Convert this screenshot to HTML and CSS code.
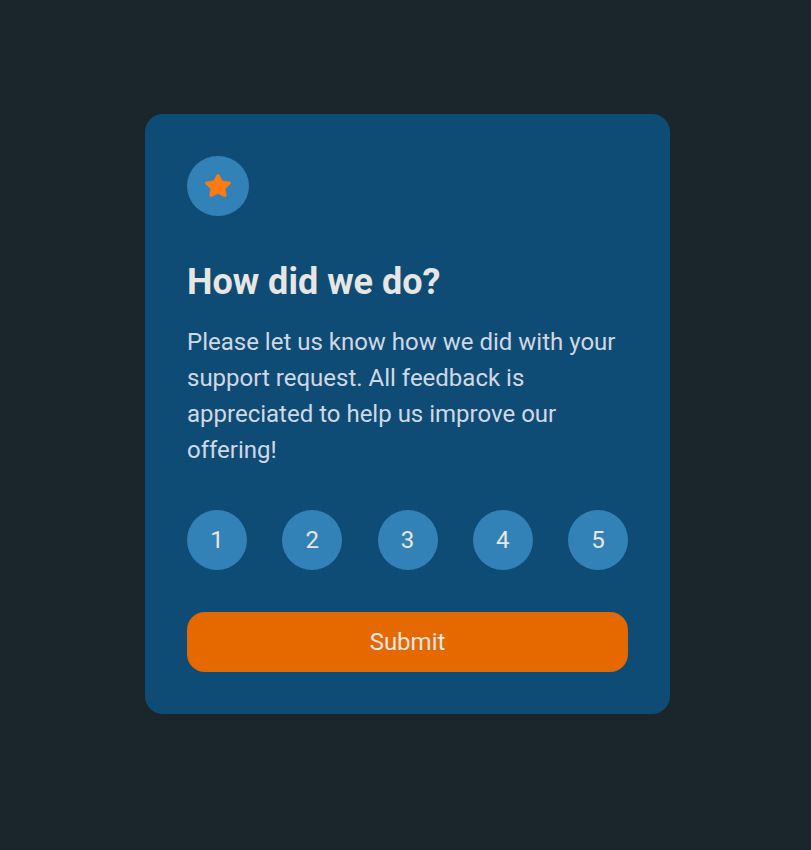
FILE: index.html
```html
<!DOCTYPE html>
<html lang="en">
<head>
<meta charset="utf-8">
<title>Rating</title>
<link rel="stylesheet" href="styles.css">
</head>
<body>
<main class="card">
  <div class="star">
    <svg viewBox="0 0 17 16" width="26" height="23" preserveAspectRatio="none"><path fill="#ff7a14" stroke="#ff7a14" stroke-width=".35" stroke-linejoin="round" d="m9.3.75 1.8 3.6c.13.26.38.43.66.47l4.1.55c.85.12 1.18 1.15.57 1.74l-2.95 2.8a.9.9 0 0 0-.25.8l.72 3.9c.15.84-.72 1.47-1.47 1.07l-3.56-1.86a.9.9 0 0 0-.84 0l-3.56 1.86c-.75.4-1.62-.23-1.47-1.07l.72-3.9a.9.9 0 0 0-.25-.8L.57 7.11c-.61-.59-.28-1.62.57-1.74l4.1-.55a.9.9 0 0 0 .66-.47L7.7.75a.9.9 0 0 1 1.6 0Z"/></svg>
  </div>
  <h1 class="title">How did we do?</h1>
  <p class="text">Please let us know how we did with your support request. All feedback is appreciated to help us improve our offering!</p>
  <div class="ratings">
    <button class="rating">1</button>
    <button class="rating">2</button>
    <button class="rating">3</button>
    <button class="rating">4</button>
    <button class="rating">5</button>
  </div>
  <button class="submit">Submit</button>
</main>
</body>
</html>
```

FILE: styles.css
```css
* { box-sizing: border-box; margin: 0; padding: 0; }
body { min-height: 100vh; background: #1b262c; font-family: Roboto, sans-serif; font-size: 24px; padding: 114px 0 0 145px; }
.card { width: 525px; height: 600px; padding: 42px; background: #0f4c75; border-radius: 18px; display: flex; flex-direction: column; }
.star { width: 62px; height: 60px; padding-bottom: 1px; border-radius: 50%; background: #3282b8; display: flex; align-items: center; justify-content: center; }
.title { margin-top: 39px; font-size: 36px; line-height: 54px; font-weight: 700; color: #e8e6e3; }
.text { margin-top: 15px; line-height: 36px; color: #cfd8e6; }
.ratings { margin-top: 42px; display: flex; justify-content: space-between; }
.rating { width: 60px; height: 60px; border: 0; border-radius: 50%; background: #3282b8; color: #e8e6e3; font: inherit; }
.submit { margin-top: 42px; height: 60px; border: 0; border-radius: 18px; background: #e66900; color: #e8e6e3; font: inherit; }
```
